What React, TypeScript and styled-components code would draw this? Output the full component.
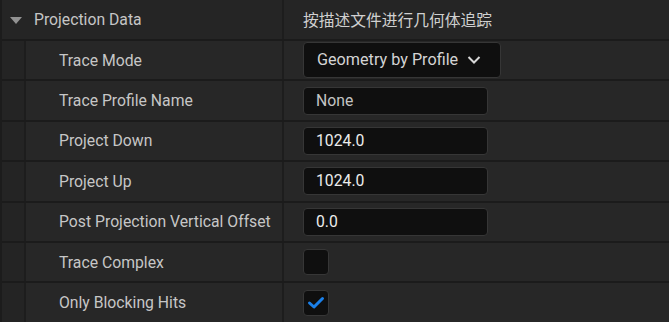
import React from 'react';
import styled, { createGlobalStyle } from 'styled-components';

const GlobalStyle = createGlobalStyle`
  html, body {
    margin: 0;
    padding: 0;
    background: #1c1c1c;
  }
  body {
    font-family: Roboto, "Noto Sans CJK SC", "Liberation Sans", sans-serif;
  }
`;

const Panel = styled.div`
  width: 669px;
  height: 322px;
  overflow: hidden;
  background: #262626;
  border-left: 2px solid #1c1c1c;
  box-sizing: border-box;
  display: flex;
  flex-direction: column;
`;

const Row = styled.div<{ $header?: boolean }>`
  display: flex;
  height: ${(p) => (p.$header ? '39px' : '38.4px')};
  border-bottom: 2px solid #1b1b1b;
  background: ${(p) => (p.$header ? '#252525' : '#272727')};
  flex-shrink: 0;
`;

const Indent = styled.div`
  width: 22px;
  background: #242424;
  border-right: 2px solid #1d1d1d;
`;

const NameCell = styled.div<{ $pad: number; $width: number }>`
  width: ${(p) => p.$width}px;
  display: flex;
  align-items: center;
  padding-left: ${(p) => p.$pad}px;
  box-sizing: border-box;
  color: #c6c6c6;
  font-size: 15.75px;
  white-space: nowrap;
`;

const ValueCell = styled.div`
  flex: 1;
  display: flex;
  align-items: center;
  padding-left: 19px;
  border-left: 2px solid #1d1d1d;
  color: #d0d0d0;
  font-size: 15.75px;
`;

const Caret = styled.span`
  width: 0;
  height: 0;
  border-left: 6.5px solid transparent;
  border-right: 6.5px solid transparent;
  border-top: 7px solid #929292;
  margin-left: 8px;
  margin-right: 12px;
  margin-top: 1px;
`;

const Field = styled.div<{ $width: number; $height: number; $dim?: boolean }>`
  width: ${(p) => p.$width}px;
  height: ${(p) => p.$height}px;
  box-sizing: border-box;
  background: #0f0f0f;
  border: 1px solid #363636;
  border-radius: 4px;
  display: flex;
  align-items: center;
  padding-left: 12px;
  padding-bottom: 1px;
  color: ${(p) => (p.$dim ? '#c4c4c4' : '#ececec')};
  font-size: 15.75px;
`;

const Combo = styled(Field)`
  padding-left: 13px;
  gap: 9px;
  color: #d4d4d4;
  font-size: 16.2px;
`;

const Check = styled.div`
  width: 26px;
  height: 26px;
  box-sizing: border-box;
  background: #0f0f0f;
  border: 1px solid #363636;
  border-radius: 4px;
  display: flex;
  align-items: center;
  justify-content: center;
`;

type Prop = {
  name: string;
  kind: 'combo' | 'text' | 'check';
  value?: string;
  checked?: boolean;
  dim?: boolean;
};

const props: Prop[] = [
  { name: 'Trace Mode', kind: 'combo', value: 'Geometry by Profile' },
  { name: 'Trace Profile Name', kind: 'text', value: 'None', dim: true },
  { name: 'Project Down', kind: 'text', value: '1024.0' },
  { name: 'Project Up', kind: 'text', value: '1024.0' },
  { name: 'Post Projection Vertical Offset', kind: 'text', value: '0.0' },
  { name: 'Trace Complex', kind: 'check', checked: false },
  { name: 'Only Blocking Hits', kind: 'check', checked: true },
];

const renderValue = (p: Prop) => {
  if (p.kind === 'combo') {
    return (
      <Combo $width={198} $height={36}>
        {p.value}
        <svg width="14" height="10" viewBox="0 0 14 10">
          <polyline points="1.5,2 7,7.5 12.5,2" fill="none" stroke="#d8d8d8" strokeWidth="2" />
        </svg>
      </Combo>
    );
  }
  if (p.kind === 'check') {
    return (
      <Check>
        {p.checked && (
          <svg width="18" height="14" viewBox="0 0 18 14">
            <polyline
              points="2.5,7 7,11 15.5,2.5"
              fill="none"
              stroke="#1a80ea"
              strokeWidth="3"
              strokeLinecap="round"
              strokeLinejoin="round"
            />
          </svg>
        )}
      </Check>
    );
  }
  return (
    <Field $width={185} $height={28} $dim={p.dim}>
      {p.value}
    </Field>
  );
};

const App = () => (
  <>
    <GlobalStyle />
    <Panel>
      <Row $header>
        <NameCell $pad={0} $width={280}>
          <Caret />
          Projection Data
        </NameCell>
        <ValueCell>按描述文件进行几何体追踪</ValueCell>
      </Row>
      {props.map((p) => (
        <Row key={p.name}>
          <Indent />
          <NameCell $pad={33} $width={256}>
            {p.name}
          </NameCell>
          <ValueCell>{renderValue(p)}</ValueCell>
        </Row>
      ))}
    </Panel>
  </>
);

export default App;
